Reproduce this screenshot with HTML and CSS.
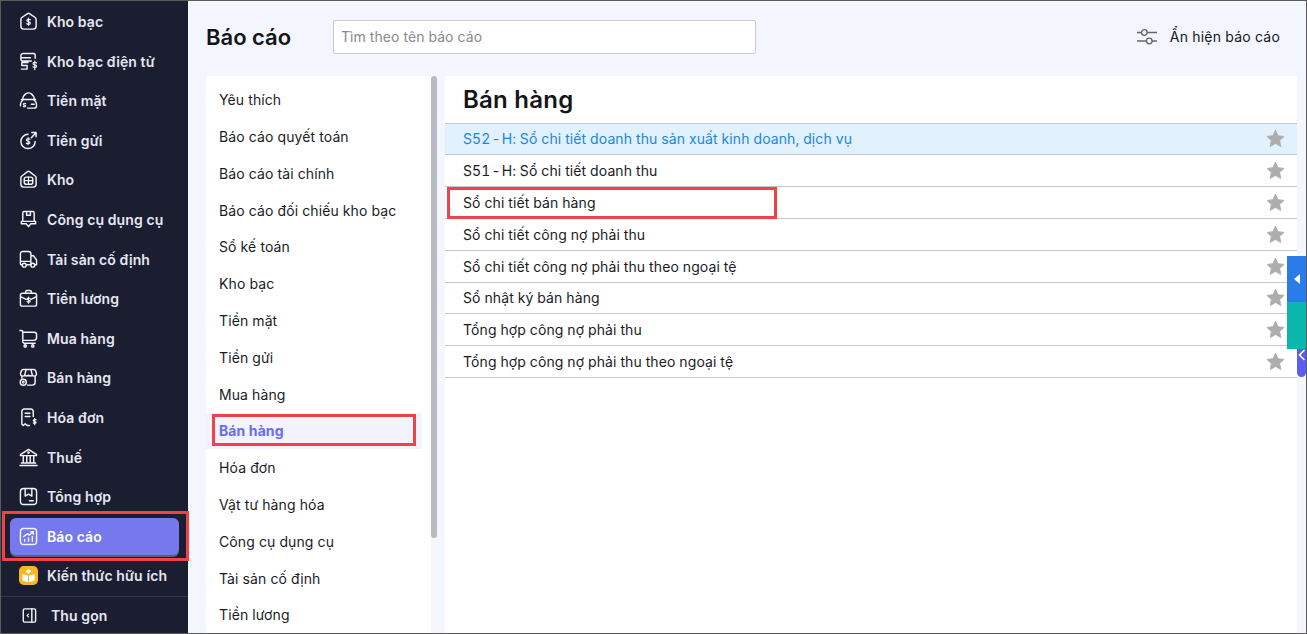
FILE: index.html
```html
<!DOCTYPE html>
<html lang="vi">
<head>
<meta charset="utf-8">
<title>Báo cáo</title>
<link rel="stylesheet" href="styles.css">
</head>
<body>
<svg class="defs" width="0" height="0">
  <symbol id="star" viewBox="0 0 24 24"><path d="M12 2.500l2.900 6.300 6.900.8-5.100 4.700 1.400 6.800-6.100-3.400-6.100 3.400 1.400-6.800-5.100-4.700 6.900-.8z"/></symbol>
</svg>
<div class="app">
  <nav class="sidebar">
    <div class="nav-list">
      <a class="nav-item"><svg class="nav-icon" viewBox="0 0 20 20"><path d="M2 7.500q0-1 1-1.700L9 1.700q1-.6 2 0l6 4.100q1 .7 1 1.700V15a3 3 0 0 1-3 3H5a3 3 0 0 1-3-3z"/><path class="thin" d="M12 8.300c-.8-1-3.800-.8-3.800.7 0 1.800 3.800 1 3.800 2.800 0 1.500-3 1.500-3.900.5M10 6.500v7.500"/></svg><span>Kho bạc</span></a>
      <a class="nav-item"><svg class="nav-icon" viewBox="0 0 20 20"><path d="M17 6.500V3a1.500 1.500 0 0 0-1.500-1.500h-11A2.500 2.500 0 0 0 2 4v4a1.500 1.500 0 0 0 1.500 1.500H13M2 6h10M9.500 11H3v3.200h5.500V18H2.500"/><path class="thin" d="M18.500 11.500c-.8-1.100-3.800-.9-3.800.6 0 1.900 3.800 1 3.800 2.900 0 1.500-3 1.600-3.800.5M16.600 9.500v9"/></svg><span>Kho bạc điện tử</span></a>
      <a class="nav-item"><svg class="nav-icon" viewBox="0 0 20 20"><path d="M4 9q0-4 3-6 3-2 6 0 3 2 3 6M2.500 9h15M5 9q-3.500 1.500-3.500 6.500M15 9q3.500 1.500 3.500 6.500 0 2.500-2.500 2.500h-7M13 14h3"/><path class="thin" d="M7 13.300c-.5-.7-2.400-.5-2.400.6 0 1.300 2.400.7 2.400 1.900 0 1-2 1.100-2.500.4"/></svg><span>Tiền mặt</span></a>
      <a class="nav-item"><svg class="nav-icon" viewBox="0 0 20 20"><path d="M9.500 3.500A7.500 7.500 0 1 0 17 11M13 7l5-5.500M13.500 1.500H18V6"/><path class="thin" d="M11.500 8.700c-.8-1-3.800-.8-3.800.7 0 1.800 3.800 1 3.800 2.800 0 1.500-3 1.500-3.900.5M9.600 6.800v7.500"/></svg><span>Tiền gửi</span></a>
      <a class="nav-item"><svg class="nav-icon" viewBox="0 0 20 20"><path d="M2 8q0-1 1-1.700L9 1.700q1-.6 2 0l6 4.600q1 .7 1 1.700v7a3 3 0 0 1-3 3H5a3 3 0 0 1-3-3z"/><rect x="5.500" y="7.500" width="9" height="7.500" rx="2.200"/><path class="thin" d="M10 7.500V15M5.500 11.200h9"/></svg><span>Kho</span></a>
      <a class="nav-item"><svg class="nav-icon" viewBox="0 0 20 20"><path d="M4 12V3a1.500 1.500 0 0 1 1.500-1.500h9A1.500 1.500 0 0 1 16 3v9M2.500 12h15v2.500h-5l-2.500 3-2.500-3h-5zM8 2v3.500h4V2"/></svg><span>Công cụ dụng cụ</span></a>
      <a class="nav-item"><svg class="nav-icon" viewBox="0 0 20 20"><path d="M3 15.500H2.500a1 1 0 0 1-1-1V4a2.500 2.500 0 0 1 2.500-2.500h6A2.500 2.500 0 0 1 12.500 4v11.500H8M12.500 6h2.700l3.300 4.500v5H17M1.500 12h11"/><circle cx="5.500" cy="16" r="2"/><circle cx="14.500" cy="16" r="2"/></svg><span>Tài sản cố định</span></a>
      <a class="nav-item"><svg class="nav-icon" viewBox="0 0 20 20"><path d="M7 4.500V3a1.500 1.500 0 0 1 1.500-1.500h3A1.500 1.500 0 0 1 13 3v1.500M3.500 4.500h13a2 2 0 0 1 2 2V16a2 2 0 0 1-2 2h-13a2 2 0 0 1-2-2V6.500a2 2 0 0 1 2-2zM1.500 8l6 3M18.500 8l-6 3"/><path class="thin" d="M11.800 10c-.6-.8-3.400-.7-3.400.6 0 1.500 3.400.8 3.400 2.200 0 1.200-2.600 1.300-3.400.5M10 8.500v6.500"/></svg><span>Tiền lương</span></a>
      <a class="nav-item"><svg class="nav-icon" viewBox="0 0 20 20"><path d="M1 1.500h1.500A1.500 1.500 0 0 1 4 3v10.500a1.500 1.500 0 0 0 1.500 1.500H17M4 3.500h12a2.500 2.500 0 0 1 2.500 2.500v3a3 3 0 0 1-3 3H4"/><circle cx="6.500" cy="17.800" r="1.200"/><circle cx="14.500" cy="17.800" r="1.200"/></svg><span>Mua hàng</span></a>
      <a class="nav-item"><svg class="nav-icon" viewBox="0 0 20 20"><path d="M3 10.500V8M17 8v7a3 3 0 0 1-3 3H9M4.500 1.500h11a2 2 0 0 1 2 1.500l1 3a2.500 2.500 0 0 1-4.500 1.500 3 3 0 0 1-4 0 3 3 0 0 1-4 0A2.500 2.500 0 0 1 1.500 6l1-3a2 2 0 0 1 2-1.500zM7.500 1.500 6 7.500M12.500 1.500 14 7.500"/><circle cx="4.500" cy="15" r="3.200"/><circle class="thin" cx="4.500" cy="15" r=".9"/></svg><span>Bán hàng</span></a>
      <a class="nav-item"><svg class="nav-icon" viewBox="0 0 20 20"><path d="M11 18.500H8.500L6.500 16.500 4.500 18.500 3 17V3.500A2.500 2.500 0 0 1 5.500 1h7A2.500 2.500 0 0 1 15 3.500V9M6.500 5.500h5M6.500 9h5"/><path class="thin" d="M18 12.500c-.6-.8-3-.6-3 .6 0 1.500 3 .8 3 2.200 0 1.200-2.400 1.300-3 .4M16.500 11v6.500"/></svg><span>Hóa đơn</span></a>
      <a class="nav-item"><svg class="nav-icon" viewBox="0 0 20 20"><path d="M1.500 7 10 1.500 18.500 7v1h-17zM1 18.500h18M2.500 15.800h15M4.500 8.500v7M8.200 8.500v7M11.800 8.500v7M15.500 8.500v7"/><circle class="thin" cx="10" cy="4.800" r=".8"/></svg><span>Thuế</span></a>
      <a class="nav-item"><svg class="nav-icon" viewBox="0 0 20 20"><rect x="1.500" y="1.500" width="17" height="17" rx="3.500"/><path d="M6.500 2v7.500l3.500-2 3.500 2V2M11 14.500h4"/></svg><span>Tổng hợp</span></a>
      <a class="nav-item active"><svg class="nav-icon" viewBox="0 0 20 20"><rect x="1.500" y="1.500" width="17" height="17" rx="3.500"/><path d="M5 10l4-3 2 1.500L15 5M12.500 5H15v2.500M6 15v-2M10 15v-3.500M14 15v-5"/></svg><span>Báo cáo</span></a>
      <a class="nav-item"><svg class="nav-icon book" viewBox="0 0 20 20"><rect width="20" height="20" rx="5" fill="#f8b81f" stroke="none"/><path d="M3.500 8.500l6 1.700v6.800l-6-1.800zM16.500 8.500l-6 1.700v6.800l6-1.800z" fill="#fff" stroke="none"/><path d="M10 3l3 2.600-3 2.900-3-2.900z" fill="#fff" stroke="none"/></svg><span>Kiến thức hữu ích</span></a>
    </div>
    <a class="collapse"><svg class="nav-icon" viewBox="0 0 20 20"><rect x="4.500" y="3" width="13" height="14" rx="1.500"/><path d="M13.500 3v14"/><path d="M10 8.500 8.500 10l1.500 1.500" class="thin"/></svg><span>Thu gọn</span></a>
  </nav>

  <main class="content">
    <header class="top">
      <h1 class="page-title">Báo cáo</h1>
      <input class="search" type="text" placeholder="Tìm theo tên báo cáo">
      <button class="toggle" type="button">
        <svg class="toggle-icon" viewBox="0 0 20 16"><path d="M0 3.500h4.500M10 3.500h10M0 12h9.500M15 12h5"/><circle cx="7.300" cy="3.500" r="2.800"/><circle cx="12.300" cy="12" r="2.800"/></svg>
        <span>Ẩn hiện báo cáo</span>
      </button>
    </header>
    <div class="panels">
      <aside class="groups">
        <ul class="group-list">
          <li class="group">Yêu thích</li>
          <li class="group">Báo cáo quyết toán</li>
          <li class="group">Báo cáo tài chính</li>
          <li class="group">Báo cáo đối chiếu kho bạc</li>
          <li class="group">Sổ kế toán</li>
          <li class="group">Kho bạc</li>
          <li class="group">Tiền mặt</li>
          <li class="group">Tiền gửi</li>
          <li class="group">Mua hàng</li>
          <li class="group selected">Bán hàng</li>
          <li class="group">Hóa đơn</li>
          <li class="group">Vật tư hàng hóa</li>
          <li class="group">Công cụ dụng cụ</li>
          <li class="group">Tài sản cố định</li>
          <li class="group">Tiền lương</li>
        </ul>
        <div class="scroll-track"><div class="scroll-thumb"></div></div>
      </aside>
      <section class="reports">
        <h2 class="section-title">Bán hàng</h2>
        <ul class="report-list">
          <li class="report current"><span>S52<span class="hy">-</span>H: Sổ chi tiết doanh thu sản xuất kinh doanh, dịch vụ</span><svg class="star"><use href="#star"/></svg></li>
          <li class="report"><span>S51<span class="hy">-</span>H: Sổ chi tiết doanh thu</span><svg class="star"><use href="#star"/></svg></li>
          <li class="report"><span>Sổ chi tiết bán hàng</span><svg class="star"><use href="#star"/></svg></li>
          <li class="report"><span>Sổ chi tiết công nợ phải thu</span><svg class="star"><use href="#star"/></svg></li>
          <li class="report"><span>Sổ chi tiết công nợ phải thu theo ngoại tệ</span><svg class="star"><use href="#star"/></svg></li>
          <li class="report"><span>Sổ nhật ký bán hàng</span><svg class="star"><use href="#star"/></svg></li>
          <li class="report"><span>Tổng hợp công nợ phải thu</span><svg class="star"><use href="#star"/></svg></li>
          <li class="report"><span>Tổng hợp công nợ phải thu theo ngoại tệ</span><svg class="star"><use href="#star"/></svg></li>
        </ul>
      </section>
    </div>
  </main>
</div>

<div class="float-purple"><svg viewBox="0 0 8 12"><path d="M6.500 1 1.500 6l5 5"/></svg></div>
<div class="float-tabs">
  <div class="tab-blue"><svg viewBox="0 0 6 10"><path d="M6 0v10L0 5z"/></svg></div>
  <div class="tab-teal"></div>
</div>

<div class="mark mark-nav"></div>
<div class="mark mark-group"></div>
<div class="mark mark-report"></div>
</body>
</html>
```
FILE: styles.css
```css
* { box-sizing: border-box; }
html, body { height: 100%; }
body {
  margin: 0;
  overflow: hidden;
  font-family: Inter, "Noto Sans", sans-serif;
  font-size: 14px;
  letter-spacing: .1px;
  color: #1b1b1f;
  background: #f3f6ff;
}
.defs { position: absolute; }
.app {
  display: flex;
  width: 1307px;
  height: 634px;
  border: 1px solid #5a5a5a;
  overflow: hidden;
}
.sidebar {
  width: 187px;
  flex: none;
  background: #1b1e30;
  color: #e6e7f4;
  display: flex;
  flex-direction: column;
}
.nav-list {
  padding-top: .7px;
  border-bottom: 1px solid #34374a;
  height: 596px;
}
.nav-item {
  display: flex;
  align-items: center;
  gap: 9px;
  height: 39.6px;
  margin: 0 9px;
  padding-left: 9px;
  font-weight: 600;
  font-size: 14px;
  border-radius: 6px;
}
.nav-item.active {
  background: #7678ed;
  color: #fff;
  height: 37px;
  margin-top: 1.3px;
  margin-bottom: 1.3px;
  box-shadow: 0 2px 0 #5c5f73;
}
.nav-icon {
  width: 19px;
  height: 19px;
  flex: none;
  fill: none;
  stroke: #f4f5fc;
  stroke-width: 1.5;
  stroke-linecap: round;
  stroke-linejoin: round;
}
.nav-icon .thin { stroke-width: 1.2; }
.collapse {
  display: flex;
  align-items: center;
  gap: 13px;
  height: 36px;
  padding-left: 18px;
  font-weight: 600;
  font-size: 14px;
}
.content {
  flex: 1;
  min-width: 0;
  display: flex;
  flex-direction: column;
  padding-right: 9px;
}
.top {
  display: flex;
  align-items: center;
  height: 71px;
  margin-bottom: 4px;
  padding-left: 18px;
}
.page-title {
  margin: 0;
  width: 127px;
  font-size: 22px;
  font-weight: 600;
  letter-spacing: 0;
  color: #15151a;
}
.search {
  width: 423px;
  height: 34px;
  padding: 0 7px;
  border: 1px solid #c9cbd3;
  border-radius: 2px;
  background: #fff;
  font: 14px Inter, sans-serif;
  letter-spacing: .05px;
}
.search::placeholder { color: #8a8a8a; opacity: 1; }
.toggle {
  display: flex;
  align-items: center;
  gap: 13px;
  margin-left: auto;
  margin-right: 17px;
  padding: 0;
  border: 0;
  background: none;
  font: 14px Inter, sans-serif;
  letter-spacing: .2px;
  color: #15151a;
}
.toggle-icon {
  width: 20px;
  height: 16px;
  fill: none;
  stroke: #666;
  stroke-width: 1.3;
}
.panels {
  flex: 1;
  display: flex;
  min-height: 0;
  padding-left: 18px;
  gap: 8px;
}
.groups {
  position: relative;
  width: 231px;
  flex: none;
  display: flex;
  background: #fff;
}
.group-list {
  list-style: none;
  margin: 0;
  padding: 5.4px 0 0;
  width: 225px;
}
.group {
  display: flex;
  align-items: center;
  height: 36.8px;
  padding-left: 13px;
  margin-right: 9px;
  color: #1b1b1f;
}
.group.selected {
  background: #f2f3fd;
  color: #6a6cf0;
  font-weight: 700;
}
.scroll-track {
  width: 6px;
  background: #f6f6f8;
}
.scroll-thumb {
  height: 462px;
  background: #b8bbc4;
  border-radius: 3px;
}
.reports {
  flex: 1;
  min-width: 0;
  background: #fff;
}
.section-title {
  margin: 0;
  height: 46.6px;
  padding: 9px 0 0 18px;
  font-size: 24px;
  line-height: 29px;
  font-weight: 600;
  letter-spacing: .25px;
  color: #15151a;
}
.report-list {
  list-style: none;
  margin: 0;
  padding: 0;
  border-top: 1px solid #c5c7cc;
}
.report {
  display: flex;
  align-items: center;
  justify-content: space-between;
  height: 31.8px;
  padding: 0 11px 0 18px;
  border-bottom: 1px solid #c5c7cc;
  font-variant-numeric: tabular-nums;
}
.hy { margin: 0 1px; }
.report.current {
  background: #e1f1fe;
  color: #1c86dc;
}
.star {
  width: 21px;
  height: 21px;
  fill: #adadad;
  stroke: #adadad;
  stroke-width: 1;
  stroke-linejoin: round;
}
.float-tabs {
  position: absolute;
  left: 1287px;
  top: 256px;
  width: 19px;
}
.tab-blue {
  height: 46px;
  background: #2a7de9;
  display: flex;
  align-items: center;
  justify-content: center;
}
.tab-blue svg { width: 6px; height: 10px; fill: #fff; }
.tab-teal { height: 47px; background: #0bb6ad; }
.float-purple {
  position: absolute;
  left: 1297px;
  top: 340px;
  width: 9px;
  height: 37px;
  background: #5c5cf0;
  border-radius: 0 0 5px 5px;
}
.float-purple svg {
  position: absolute;
  left: 1px;
  top: 9px;
  width: 8px;
  height: 12px;
  fill: none;
  stroke: #fff;
  stroke-width: 1.6;
}
.mark {
  position: absolute;
  border: 3px solid #f04347;
}
.mark-nav { left: 2px; top: 511px; width: 187px; height: 50px; }
.mark-group { left: 212px; top: 414px; width: 204px; height: 32px; }
.mark-report { left: 447px; top: 187px; width: 330px; height: 32px; }
```
